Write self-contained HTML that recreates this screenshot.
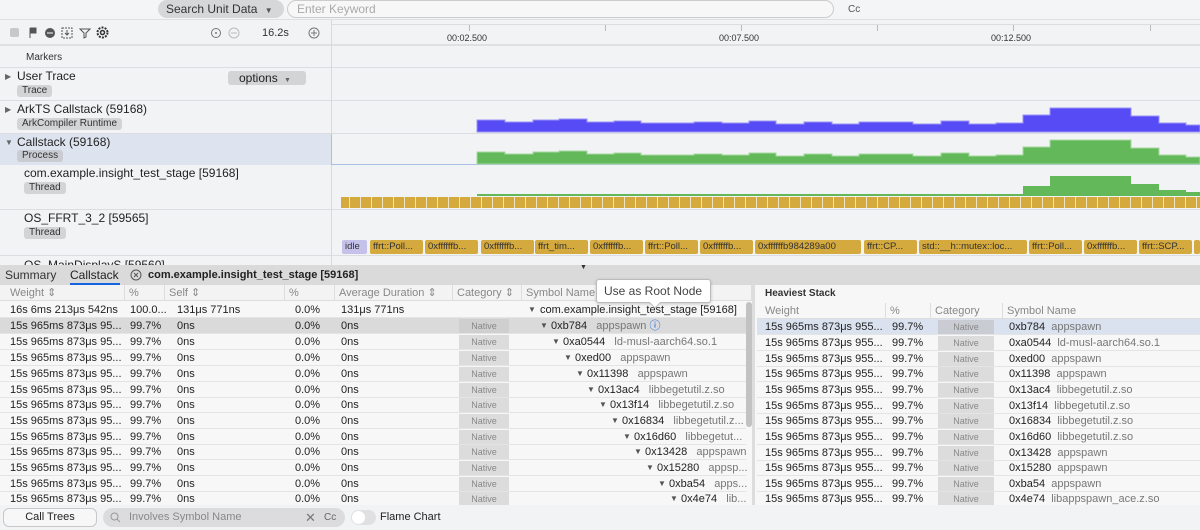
<!DOCTYPE html>
<html><head><meta charset="utf-8"><style>
*{box-sizing:border-box;margin:0;padding:0}
body{width:1200px;height:530px;overflow:hidden;background:#f2f3f5;font-family:"Liberation Sans",sans-serif;font-size:12px;color:#222;position:relative}
.a{position:absolute;white-space:nowrap}
.tag{position:absolute;background:#d3d4d6;border-radius:3px;font-size:10px;padding:0 5px;height:12px;line-height:12px;color:#333}
.hl{position:absolute;left:0;height:1px;background:#dcdde0}
.row{position:absolute;height:16px;line-height:16px;font-size:11px;border-bottom:1px solid #e3e4e6}
.row span{position:absolute;top:0;white-space:nowrap}
.nat{position:absolute;top:1px;height:14px;line-height:14px;background:#dcdcdc;color:#888;font-size:9px;text-align:center}
.g{color:#777}
.hd{position:absolute;height:16px;line-height:16px;font-size:11px;color:#888;border-right:1px solid #ddd;padding-left:4px;top:0}
.chip{position:absolute;top:240px;height:14px;line-height:14px;background:#d4a93e;color:#333;font-size:9.5px;border-radius:2px;padding-left:3px;overflow:hidden}
</style></head><body>
<div class="a" style="left:0;top:0;width:1200px;height:20px;background:#f4f5f7;border-bottom:1px solid #e0e0e0"></div>
<div class="a" style="left:158px;top:0;width:126px;height:18px;background:#d6d7d9;border-radius:9px;font-size:12px;line-height:18px;padding-left:8px;color:#333">Search Unit Data <span style="font-size:8px;color:#555;margin-left:4px">▼</span></div>
<div class="a" style="left:287px;top:0;width:547px;height:18px;border:1px solid #ccc;border-radius:9px;background:#f7f7f8;line-height:16px;padding-left:9px;color:#aaa">Enter Keyword</div>
<div class="a" style="left:848px;top:4px;font-size:10px;color:#555">Cc</div>
<div class="a" style="left:0;top:20px;width:1200px;height:26px;background:#f2f3f5;border-bottom:2px solid #dfe0e2"></div>
<div class="a" style="left:10px;top:28px;width:9px;height:9px;background:#c8c8c8;border-radius:2px"></div>
<svg class="a" style="left:27px;top:27px" width="12" height="12"><path d="M3 1v10M3 1h6v5H3" fill="#555" stroke="#555"/></svg>
<svg class="a" style="left:44px;top:27px" width="12" height="12"><circle cx="6" cy="6" r="5" fill="#555"/><path d="M3 6h6" stroke="#fff"/></svg>
<svg class="a" style="left:61px;top:27px" width="12" height="12"><rect x="1" y="1" width="10" height="10" fill="none" stroke="#555" stroke-dasharray="2 1"/><path d="M6 3v5M4 6l2 2 2-2" stroke="#555" fill="none"/></svg>
<svg class="a" style="left:79px;top:27px" width="12" height="12"><path d="M1 2h10L7 6v4L5 11V6z" fill="none" stroke="#555"/></svg>
<svg class="a" style="left:96px;top:26px" width="13" height="13"><circle cx="6.5" cy="6.5" r="5" fill="none" stroke="#333" stroke-width="2" stroke-dasharray="2 1.2"/><circle cx="6.5" cy="6.5" r="2" fill="none" stroke="#333" stroke-width="1.5"/></svg>
<svg class="a" style="left:210px;top:27px" width="12" height="12"><circle cx="6" cy="6" r="4.5" fill="none" stroke="#777"/><circle cx="6" cy="6" r="1" fill="#777"/></svg>
<svg class="a" style="left:228px;top:27px" width="12" height="12"><circle cx="6" cy="6" r="5" fill="none" stroke="#bbb"/><path d="M3 6h6" stroke="#bbb"/></svg>
<div class="a" style="left:262px;top:27px;font-size:11px;color:#333">16.2s</div>
<svg class="a" style="left:308px;top:27px" width="12" height="12"><circle cx="6" cy="6" r="5" fill="none" stroke="#777"/><path d="M3 6h6M6 3v6" stroke="#777"/></svg>
<div class="a" style="left:331px;top:20px;width:1px;height:245px;background:#d8d9db"></div>
<div class="a" style="left:332px;top:24px;width:868px;height:1px;background:#ddd"></div>
<div class="a" style="left:469px;top:25px;width:1px;height:6px;background:#bbb"></div>
<div class="a" style="left:605px;top:25px;width:1px;height:6px;background:#bbb"></div>
<div class="a" style="left:741px;top:25px;width:1px;height:6px;background:#bbb"></div>
<div class="a" style="left:877px;top:25px;width:1px;height:6px;background:#bbb"></div>
<div class="a" style="left:1013px;top:25px;width:1px;height:6px;background:#bbb"></div>
<div class="a" style="left:1150px;top:25px;width:1px;height:6px;background:#bbb"></div>
<div class="a" style="left:447px;top:33px;font-size:9px;color:#333">00:02.500</div>
<div class="a" style="left:719px;top:33px;font-size:9px;color:#333">00:07.500</div>
<div class="a" style="left:991px;top:33px;font-size:9px;color:#333">00:12.500</div>
<div class="a" style="left:26px;top:52px;font-size:10px;color:#333">Markers</div>
<div class="hl" style="top:67px;width:1200px"></div>
<div class="a" style="left:5px;top:72px;font-size:8px;color:#666">▶</div>
<div class="a" style="left:17px;top:69px;font-size:12px">User Trace</div>
<div class="tag" style="left:17px;top:85px">Trace</div>
<div class="a" style="left:228px;top:71px;width:78px;height:14px;background:#d3d4d6;border-radius:3px;font-size:12px;line-height:14px;padding-left:11px">options <span style="font-size:7px;color:#666;margin-left:3px">▼</span></div>
<div class="hl" style="top:100px;width:1200px"></div>
<div class="a" style="left:5px;top:105px;font-size:8px;color:#666">▶</div>
<div class="a" style="left:17px;top:102px;font-size:12px">ArkTS Callstack (59168)</div>
<div class="tag" style="left:17px;top:118px">ArkCompiler Runtime</div>
<div class="a" style="left:0;top:133px;width:331px;height:32px;background:#dde4f0"></div>
<div class="a" style="left:331px;top:133px;width:869px;height:32px;border:1px solid #a9bfe3;border-right:none"></div>
<div class="hl" style="top:133px;width:1200px"></div>
<div class="a" style="left:5px;top:138px;font-size:8px;color:#666">▼</div>
<div class="a" style="left:17px;top:135px;font-size:12px">Callstack (59168)</div>
<div class="tag" style="left:17px;top:150px;background:#c9ccd2">Process</div>
<div class="a" style="left:24px;top:166px;font-size:12px">com.example.insight_test_stage [59168]</div>
<div class="tag" style="left:24px;top:182px">Thread</div>
<div class="hl" style="top:209px;width:1200px"></div>
<div class="a" style="left:24px;top:211px;font-size:12px">OS_FFRT_3_2 [59565]</div>
<div class="tag" style="left:24px;top:227px">Thread</div>
<div class="hl" style="top:255px;width:1200px"></div>
<div class="a" style="left:24px;top:256px;font-size:12px;height:9px;overflow:hidden;line-height:18px">OS_MainDisplayS [59560]</div>
<svg class="a" style="left:0;top:0" width="1200" height="266">
<defs><pattern id="st" width="11" height="11" patternUnits="userSpaceOnUse"><rect x="8" width="1" height="11" fill="#efe3c0"/></pattern></defs>
<path d="M477 132V120H505V122H533V120H559V119H587V122H614V121H641V123H694V122H722V123H749V121H776V124H804V122H832V124H859V122H913V124H941V121H969V124H996V123H1023V115H1050V108H1104V108H1131V116H1159V123H1186V125H1200V132Z" fill="#574bf5" stroke="#9a93f8"/>
<path d="M477 164V152H505V154H533V152H559V151H587V154H614V153H641V155H694V154H722V155H749V153H776V156H804V154H832V156H859V154H913V156H941V153H969V156H996V155H1023V147H1050V140H1104V140H1131V148H1159V155H1186V157H1200V164Z" fill="#63b95a" stroke="#a6d9a0"/>
<path d="M477 196V194H1023V186H1050V176H1104V176H1131V184H1159V190H1186V192H1200V196Z" fill="#63b95a"/>
<rect x="341" y="197" width="859" height="11" fill="#d4a93e"/>
<rect x="341" y="197" width="859" height="11" fill="url(#st)"/>
</svg>
<div class="chip" style="left:342px;width:25px;background:#c4c2ea">idle</div>
<div class="chip" style="left:370px;width:53px">ffrt::Poll...</div>
<div class="chip" style="left:425px;width:53px">0xffffffb...</div>
<div class="chip" style="left:481px;width:53px">0xffffffb...</div>
<div class="chip" style="left:535px;width:53px">ffrt_tim...</div>
<div class="chip" style="left:590px;width:53px">0xffffffb...</div>
<div class="chip" style="left:645px;width:53px">ffrt::Poll...</div>
<div class="chip" style="left:700px;width:53px">0xffffffb...</div>
<div class="chip" style="left:755px;width:106px">0xffffffb984289a00</div>
<div class="chip" style="left:864px;width:53px">ffrt::CP...</div>
<div class="chip" style="left:919px;width:108px">std::__h::mutex::loc...</div>
<div class="chip" style="left:1029px;width:53px">ffrt::Poll...</div>
<div class="chip" style="left:1084px;width:53px">0xffffffb...</div>
<div class="chip" style="left:1139px;width:53px">ffrt::SCP...</div>
<div class="chip" style="left:1194px;width:6px"></div>
<div class="a" style="left:0;top:265px;width:1200px;height:20px;background:#dadada"></div>
<div class="a" style="left:580px;top:264px;font-size:7px;color:#333">▼</div>
<div class="a" style="left:5px;top:268px;font-size:12px;color:#333">Summary</div>
<div class="a" style="left:70px;top:268px;font-size:12px;color:#222">Callstack</div>
<div class="a" style="left:70px;top:283px;width:50px;height:2px;background:#1565e0"></div>
<svg class="a" style="left:130px;top:269px" width="12" height="12"><circle cx="6" cy="6" r="5" fill="none" stroke="#555"/><path d="M4 4l4 4M8 4l-4 4" stroke="#555"/></svg>
<div class="a" style="left:148px;top:269px;font-size:11px;font-weight:bold">com.example.insight_test_stage [59168]</div>
<div class="a" style="left:0;top:285px;width:752px;height:220px;background:#f7f7f8"></div>
<div class="a" style="left:0;top:285px;width:752px;height:16px;background:#f3f3f4;border-bottom:1px solid #ddd">
<div class="hd" style="left:0;width:125px;padding-left:10px">Weight ⇕</div>
<div class="hd" style="left:125px;width:40px">%</div>
<div class="hd" style="left:165px;width:120px">Self ⇕</div>
<div class="hd" style="left:285px;width:50px">%</div>
<div class="hd" style="left:335px;width:118px">Average Duration ⇕</div>
<div class="hd" style="left:453px;width:69px">Category ⇕</div>
<div class="hd" style="left:522px;width:230px">Symbol Name</div>
</div>
<div class="a" style="left:746px;top:302px;width:6px;height:125px;background:#c2c2c2;border-radius:3px"></div>
<div class="a" style="left:752px;top:285px;width:3px;height:220px;background:#ddd"></div>
<div class="a" style="left:755px;top:370px;font-size:7px">▶</div>
<div class="row" style="left:0;top:302px;width:746px"><span style="left:10px">16s 6ms 213μs 542ns</span><span style="left:130px">100.0...</span><span style="left:177px">131μs 771ns</span><span style="left:295px">0.0%</span><span style="left:341px">131μs 771ns</span><span style="left:528px;font-size:8px;color:#555">▼</span><span style="left:540px">com.example.insight_test_stage [59168]</span></div>
<div class="row" style="left:0;top:318px;width:746px;background:#dadada"><span style="left:10px">15s 965ms 873μs 95...</span><span style="left:130px">99.7%</span><span style="left:177px">0ns</span><span style="left:295px">0.0%</span><span style="left:341px">0ns</span><div class="nat" style="left:459px;width:50px;background:#cfcfcf">Native</div><span style="left:540px;font-size:8px;color:#555">▼</span><span style="left:551px">0xb784&nbsp;&nbsp; <span class="g" style="position:static">appspawn</span> <span style="position:static;color:#1565e0">ⓘ</span></span></div>
<div class="row" style="left:0;top:334px;width:746px"><span style="left:10px">15s 965ms 873μs 95...</span><span style="left:130px">99.7%</span><span style="left:177px">0ns</span><span style="left:295px">0.0%</span><span style="left:341px">0ns</span><div class="nat" style="left:459px;width:50px">Native</div><span style="left:552px;font-size:8px;color:#555">▼</span><span style="left:563px">0xa0544&nbsp;&nbsp; <span class="g" style="position:static">ld-musl-aarch64.so.1</span></span></div>
<div class="row" style="left:0;top:350px;width:746px"><span style="left:10px">15s 965ms 873μs 95...</span><span style="left:130px">99.7%</span><span style="left:177px">0ns</span><span style="left:295px">0.0%</span><span style="left:341px">0ns</span><div class="nat" style="left:459px;width:50px">Native</div><span style="left:564px;font-size:8px;color:#555">▼</span><span style="left:575px">0xed00&nbsp;&nbsp; <span class="g" style="position:static">appspawn</span></span></div>
<div class="row" style="left:0;top:366px;width:746px"><span style="left:10px">15s 965ms 873μs 95...</span><span style="left:130px">99.7%</span><span style="left:177px">0ns</span><span style="left:295px">0.0%</span><span style="left:341px">0ns</span><div class="nat" style="left:459px;width:50px">Native</div><span style="left:576px;font-size:8px;color:#555">▼</span><span style="left:587px">0x11398&nbsp;&nbsp; <span class="g" style="position:static">appspawn</span></span></div>
<div class="row" style="left:0;top:382px;width:746px"><span style="left:10px">15s 965ms 873μs 95...</span><span style="left:130px">99.7%</span><span style="left:177px">0ns</span><span style="left:295px">0.0%</span><span style="left:341px">0ns</span><div class="nat" style="left:459px;width:50px">Native</div><span style="left:587px;font-size:8px;color:#555">▼</span><span style="left:598px">0x13ac4&nbsp;&nbsp; <span class="g" style="position:static">libbegetutil.z.so</span></span></div>
<div class="row" style="left:0;top:397px;width:746px"><span style="left:10px">15s 965ms 873μs 95...</span><span style="left:130px">99.7%</span><span style="left:177px">0ns</span><span style="left:295px">0.0%</span><span style="left:341px">0ns</span><div class="nat" style="left:459px;width:50px">Native</div><span style="left:599px;font-size:8px;color:#555">▼</span><span style="left:610px">0x13f14&nbsp;&nbsp; <span class="g" style="position:static">libbegetutil.z.so</span></span></div>
<div class="row" style="left:0;top:413px;width:746px"><span style="left:10px">15s 965ms 873μs 95...</span><span style="left:130px">99.7%</span><span style="left:177px">0ns</span><span style="left:295px">0.0%</span><span style="left:341px">0ns</span><div class="nat" style="left:459px;width:50px">Native</div><span style="left:611px;font-size:8px;color:#555">▼</span><span style="left:622px">0x16834&nbsp;&nbsp; <span class="g" style="position:static">libbegetutil.z...</span></span></div>
<div class="row" style="left:0;top:429px;width:746px"><span style="left:10px">15s 965ms 873μs 95...</span><span style="left:130px">99.7%</span><span style="left:177px">0ns</span><span style="left:295px">0.0%</span><span style="left:341px">0ns</span><div class="nat" style="left:459px;width:50px">Native</div><span style="left:623px;font-size:8px;color:#555">▼</span><span style="left:634px">0x16d60&nbsp;&nbsp; <span class="g" style="position:static">libbegetut...</span></span></div>
<div class="row" style="left:0;top:444px;width:746px"><span style="left:10px">15s 965ms 873μs 95...</span><span style="left:130px">99.7%</span><span style="left:177px">0ns</span><span style="left:295px">0.0%</span><span style="left:341px">0ns</span><div class="nat" style="left:459px;width:50px">Native</div><span style="left:634px;font-size:8px;color:#555">▼</span><span style="left:645px">0x13428&nbsp;&nbsp; <span class="g" style="position:static">appspawn</span></span></div>
<div class="row" style="left:0;top:460px;width:746px"><span style="left:10px">15s 965ms 873μs 95...</span><span style="left:130px">99.7%</span><span style="left:177px">0ns</span><span style="left:295px">0.0%</span><span style="left:341px">0ns</span><div class="nat" style="left:459px;width:50px">Native</div><span style="left:646px;font-size:8px;color:#555">▼</span><span style="left:657px">0x15280&nbsp;&nbsp; <span class="g" style="position:static">appsp...</span></span></div>
<div class="row" style="left:0;top:476px;width:746px"><span style="left:10px">15s 965ms 873μs 95...</span><span style="left:130px">99.7%</span><span style="left:177px">0ns</span><span style="left:295px">0.0%</span><span style="left:341px">0ns</span><div class="nat" style="left:459px;width:50px">Native</div><span style="left:658px;font-size:8px;color:#555">▼</span><span style="left:669px">0xba54&nbsp;&nbsp; <span class="g" style="position:static">apps...</span></span></div>
<div class="row" style="left:0;top:491px;width:746px"><span style="left:10px">15s 965ms 873μs 95...</span><span style="left:130px">99.7%</span><span style="left:177px">0ns</span><span style="left:295px">0.0%</span><span style="left:341px">0ns</span><div class="nat" style="left:459px;width:50px">Native</div><span style="left:670px;font-size:8px;color:#555">▼</span><span style="left:681px">0x4e74&nbsp;&nbsp; <span class="g" style="position:static">lib...</span></span></div>
<div class="a" style="left:596px;top:279px;width:115px;height:24px;background:#fff;border:1px solid #bbb;border-radius:3px;box-shadow:0 1px 3px rgba(0,0,0,.2);font-size:12px;line-height:22px;padding-left:7px;color:#444">Use as Root Node</div>
<div class="a" style="left:651px;top:299px;width:8px;height:8px;background:#fff;border-right:1px solid #bbb;border-bottom:1px solid #bbb;transform:rotate(45deg)"></div>
<div class="a" style="left:755px;top:285px;width:445px;height:220px;background:#f7f7f8"></div>
<div class="a" style="left:765px;top:288px;font-size:10px;font-weight:bold;color:#333">Heaviest Stack</div>
<div class="a" style="left:757px;top:303px;width:443px;height:16px;border-bottom:1px solid #ddd">
<div class="hd" style="left:0;width:129px;padding-left:8px">Weight</div>
<div class="hd" style="left:129px;width:45px">%</div>
<div class="hd" style="left:174px;width:72px">Category</div>
<div class="hd" style="left:246px;width:197px;border:none">Symbol Name</div>
</div>
<div class="row" style="left:757px;top:319px;width:443px;background:#dae2ef"><span style="left:8px">15s 965ms 873μs 955...</span><span style="left:135px">99.7%</span><div class="nat" style="left:181px;width:56px;background:#c9ccd2">Native</div><span style="left:252px">0xb784&nbsp;&nbsp;<span class="g" style="position:static">appspawn</span></span></div>
<div class="row" style="left:757px;top:335px;width:443px"><span style="left:8px">15s 965ms 873μs 955...</span><span style="left:135px">99.7%</span><div class="nat" style="left:181px;width:56px">Native</div><span style="left:252px">0xa0544&nbsp;&nbsp;<span class="g" style="position:static">ld-musl-aarch64.so.1</span></span></div>
<div class="row" style="left:757px;top:351px;width:443px"><span style="left:8px">15s 965ms 873μs 955...</span><span style="left:135px">99.7%</span><div class="nat" style="left:181px;width:56px">Native</div><span style="left:252px">0xed00&nbsp;&nbsp;<span class="g" style="position:static">appspawn</span></span></div>
<div class="row" style="left:757px;top:366px;width:443px"><span style="left:8px">15s 965ms 873μs 955...</span><span style="left:135px">99.7%</span><div class="nat" style="left:181px;width:56px">Native</div><span style="left:252px">0x11398&nbsp;&nbsp;<span class="g" style="position:static">appspawn</span></span></div>
<div class="row" style="left:757px;top:382px;width:443px"><span style="left:8px">15s 965ms 873μs 955...</span><span style="left:135px">99.7%</span><div class="nat" style="left:181px;width:56px">Native</div><span style="left:252px">0x13ac4&nbsp;&nbsp;<span class="g" style="position:static">libbegetutil.z.so</span></span></div>
<div class="row" style="left:757px;top:398px;width:443px"><span style="left:8px">15s 965ms 873μs 955...</span><span style="left:135px">99.7%</span><div class="nat" style="left:181px;width:56px">Native</div><span style="left:252px">0x13f14&nbsp;&nbsp;<span class="g" style="position:static">libbegetutil.z.so</span></span></div>
<div class="row" style="left:757px;top:413px;width:443px"><span style="left:8px">15s 965ms 873μs 955...</span><span style="left:135px">99.7%</span><div class="nat" style="left:181px;width:56px">Native</div><span style="left:252px">0x16834&nbsp;&nbsp;<span class="g" style="position:static">libbegetutil.z.so</span></span></div>
<div class="row" style="left:757px;top:429px;width:443px"><span style="left:8px">15s 965ms 873μs 955...</span><span style="left:135px">99.7%</span><div class="nat" style="left:181px;width:56px">Native</div><span style="left:252px">0x16d60&nbsp;&nbsp;<span class="g" style="position:static">libbegetutil.z.so</span></span></div>
<div class="row" style="left:757px;top:445px;width:443px"><span style="left:8px">15s 965ms 873μs 955...</span><span style="left:135px">99.7%</span><div class="nat" style="left:181px;width:56px">Native</div><span style="left:252px">0x13428&nbsp;&nbsp;<span class="g" style="position:static">appspawn</span></span></div>
<div class="row" style="left:757px;top:460px;width:443px"><span style="left:8px">15s 965ms 873μs 955...</span><span style="left:135px">99.7%</span><div class="nat" style="left:181px;width:56px">Native</div><span style="left:252px">0x15280&nbsp;&nbsp;<span class="g" style="position:static">appspawn</span></span></div>
<div class="row" style="left:757px;top:476px;width:443px"><span style="left:8px">15s 965ms 873μs 955...</span><span style="left:135px">99.7%</span><div class="nat" style="left:181px;width:56px">Native</div><span style="left:252px">0xba54&nbsp;&nbsp;<span class="g" style="position:static">appspawn</span></span></div>
<div class="row" style="left:757px;top:491px;width:443px"><span style="left:8px">15s 965ms 873μs 955...</span><span style="left:135px">99.7%</span><div class="nat" style="left:181px;width:56px">Native</div><span style="left:252px">0x4e74&nbsp;&nbsp;<span class="g" style="position:static">libappspawn_ace.z.so</span></span></div>
<div class="a" style="left:0;top:505px;width:1200px;height:25px;background:#f2f3f5"></div>
<div class="a" style="left:3px;top:508px;width:94px;height:19px;border:1px solid #c8c8c8;border-radius:6px;background:#f7f7f7;text-align:center;line-height:17px;font-size:11px">Call Trees</div>
<div class="a" style="left:103px;top:508px;width:242px;height:19px;border-radius:10px;background:#dcdcde;font-size:11px;line-height:19px;color:#888;padding-left:26px">Involves Symbol Name</div>
<svg class="a" style="left:110px;top:512px" width="11" height="11"><circle cx="4.5" cy="4.5" r="3.5" fill="none" stroke="#999"/><path d="M7 7l3 3" stroke="#999"/></svg>
<div class="a" style="left:305px;top:510px;font-size:13px;color:#777">✕</div>
<div class="a" style="left:324px;top:512px;font-size:10px;color:#666">Cc</div>
<div class="a" style="left:351px;top:510px;width:25px;height:15px;border-radius:8px;background:#e0e0e2"></div>
<div class="a" style="left:352px;top:511px;width:13px;height:13px;border-radius:7px;background:#fff"></div>
<div class="a" style="left:380px;top:511px;font-size:11px;color:#222">Flame Chart</div>
</body></html>
